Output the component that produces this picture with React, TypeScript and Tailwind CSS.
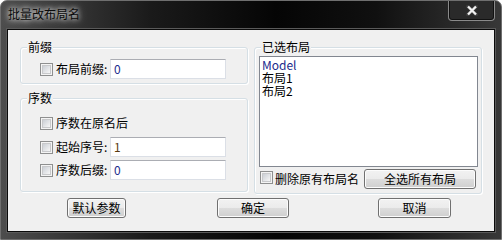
import React from "react";

function Check() {
  return (
    <span className="inline-block w-[13px] h-[13px] shrink-0 border border-[#8e8f8f] bg-[#f4f4f4] p-[1px]">
      <span className="block w-full h-full border border-[#c8c9cb] bg-[linear-gradient(135deg,#cbcfd5,#f7f7f7)]" />
    </span>
  );
}

function TextBox({ value, color }: { value: string; color: string }) {
  return (
    <div className="w-[116px] h-[20px] bg-white border border-[#dbdfe6] border-t-[#abadb3] flex items-center pl-[3px]">
      <span className={`leading-[14px] ${color}`}>{value}</span>
    </div>
  );
}

function WinButton({ label, w }: { label: string; w: string }) {
  return (
    <div
      className={`${w} h-[20px] rounded-[3px] border border-[#707070] bg-[linear-gradient(#f2f2f2,#ebebeb_50%,#dddddd_50%,#cfcfcf)] shadow-[inset_0_0_0_1px_#fcfcfc] flex items-center justify-center leading-[14px] text-black`}
    >
      {label}
    </div>
  );
}

function Group({ label, className, children }: { label: string; className: string; children: React.ReactNode }) {
  return (
    <div className={`relative rounded-[3px] border border-[#d5dfe5] shadow-[inset_1px_1px_0_#fff,1px_1px_0_#fff] ${className}`}>
      <span className="absolute -top-[8px] left-[6px] px-[1px] bg-[#f0f0f0] leading-[14px] text-black">{label}</span>
      {children}
    </div>
  );
}

export default function App() {
  return (
    <div className="w-[502px] h-[240px] overflow-hidden rounded-t-[7px] border border-[#6f6f6f] bg-[linear-gradient(90deg,#4d4d4d_0%,#1a1a1a_30%,#050505_55%,#101010_75%,#383838_100%)] font-['Noto_Sans_CJK_SC','Noto_Sans',sans-serif] text-[12px] flex flex-col">
      <div className="h-[28px] flex items-start justify-between">
        <span className="pl-[7px] pt-[6px] leading-[14px] text-[#0a0a0a] [text-shadow:0_0_5px_rgba(255,255,255,0.95),0_0_9px_rgba(255,255,255,0.7)]">
          批量改布局名
        </span>
        <div className="-mt-[1px] mr-[6px] w-[47px] h-[21px] rounded-b-[4px] border border-t-0 border-[#8a8a8a] bg-[#2a2a2a] shadow-[inset_0_0_0_1px_#111] flex items-center justify-center">
          <svg width="12" height="11" viewBox="0 0 12 11">
            <path d="M2 1.5 L10 9.5 M10 1.5 L2 9.5" stroke="#3a3a3a" strokeWidth="4" strokeLinecap="square" />
            <path d="M2 1.5 L10 9.5 M10 1.5 L2 9.5" stroke="#f2f2f2" strokeWidth="2.4" strokeLinecap="butt" />
          </svg>
        </div>
      </div>
      <div className="mx-[6px] h-[203px] bg-[#f0f0f0] border border-[#0a0a0a] shadow-[0_0_0_1px_#5a5a5a] px-[12px] pt-[17px] text-black">
        <div className="flex gap-[6px]">
          <div className="w-[228px] flex flex-col">
            <Group label="前缀" className="h-[37px] pt-[11px] pl-[19px]">
              <div className="flex items-center h-[20px]">
                <Check />
                <span className="w-[54px] ml-[3px] leading-[14px]">布局前缀:</span>
                <TextBox value="0" color="text-[#1c2b8c]" />
              </div>
            </Group>
            <Group label="序数" className="mt-[14px] h-[94px] pt-[14px] pl-[19px]">
              <div className="flex items-center h-[20px]">
                <Check />
                <span className="ml-[3px] leading-[14px]">序数在原名后</span>
              </div>
              <div className="flex items-center h-[20px] mt-[4px]">
                <Check />
                <span className="w-[54px] ml-[3px] leading-[14px]">起始序号:</span>
                <TextBox value="1" color="text-[#5a3a10]" />
              </div>
              <div className="flex items-center h-[20px] mt-[3px]">
                <Check />
                <span className="w-[54px] ml-[3px] leading-[14px]">序数后缀:</span>
                <TextBox value="0" color="text-[#1c2b8c]" />
              </div>
            </Group>
          </div>
          <Group label="已选布局" className="w-[228px] h-[147px] pt-[8px] pl-[4px] pr-[3px]">
            <div className="w-[219px] h-[111px] bg-white border border-[#828790] pl-[2px] pt-[1px] leading-[13px]">
              <div className="text-[#1c2b8c]">Model</div>
              <div>布局1</div>
              <div>布局2</div>
            </div>
            <div className="w-[219px] flex items-center mt-[2px] pr-[2px]">
              <span className="ml-[1px]">
                <Check />
              </span>
              <span className="ml-[2px] leading-[14px]">删除原有布局名</span>
              <div className="ml-auto">
                <WinButton label="全选所有布局" w="w-[112px]" />
              </div>
            </div>
          </Group>
        </div>
        <div className="flex mt-[4px] pl-[47px]">
          <WinButton label="默认参数" w="w-[59px]" />
          <div className="ml-[91px]">
            <WinButton label="确定" w="w-[72px]" />
          </div>
          <div className="ml-[89px]">
            <WinButton label="取消" w="w-[73px]" />
          </div>
        </div>
      </div>
    </div>
  );
}
